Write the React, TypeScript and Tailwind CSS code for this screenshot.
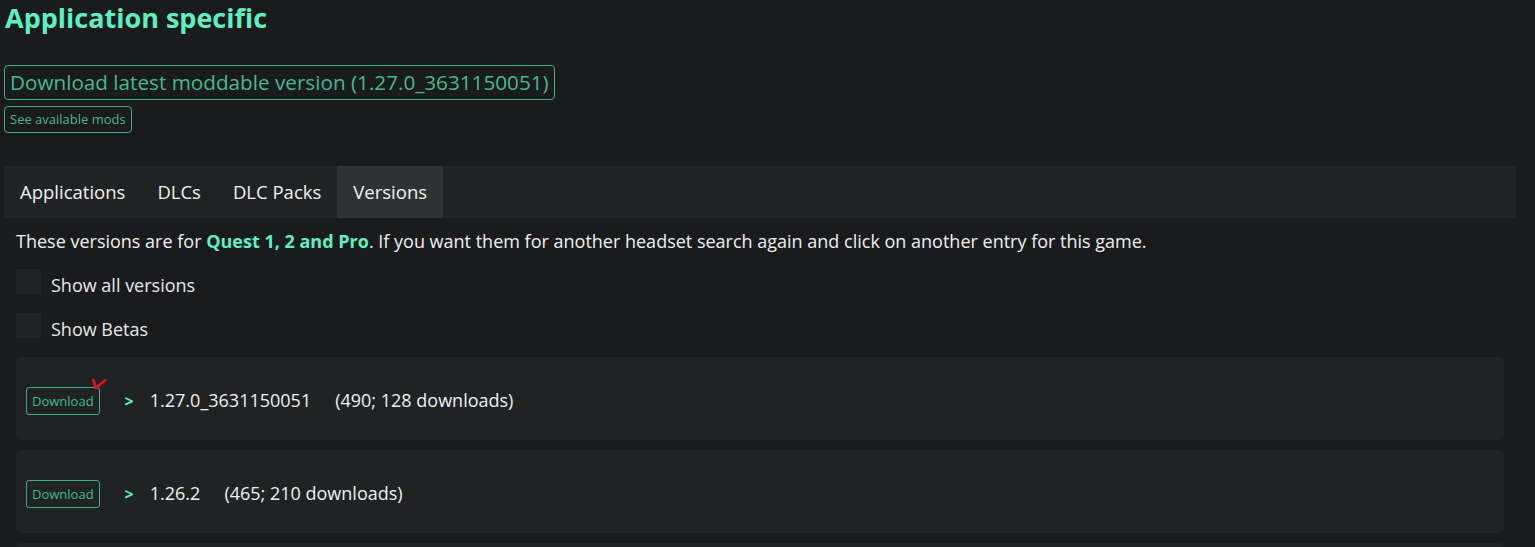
import React from "react";

const versions = [
  { v: "1.27.0_3631150051", info: "(490; 128 downloads)", mark: true },
  { v: "1.26.2", info: "(465; 210 downloads)", mark: false },
];

export default function App() {
  return (
    <div
      className="h-[547px] w-full overflow-hidden bg-[#1a1b1d] text-[#e8e8e8]"
      style={{ fontFamily: '"Open Sans", "Noto Sans", sans-serif' }}
    >
      <div className="pl-[4px] pr-[19px]">
        <h1 className="pl-[1px] text-[27px] font-bold leading-[36px] text-[#5ef0c0]">
          Application specific
        </h1>
        <div className="mt-[29px] flex flex-col items-start gap-[6px]">
          <button className="rounded-[4px] border border-[#3fae86] px-[5px] text-[20.7px] leading-[33px] text-[#45b98c]">
            Download latest moddable version (1.27.0_3631150051)
          </button>
          <button className="rounded-[4px] border border-[#3fae86] px-[5px] text-[13px] leading-[25px] text-[#45b98c]">
            See available mods
          </button>
        </div>

        <div className="mt-[33px] flex h-[52px] items-stretch bg-[#202324] text-[18.5px] text-[#f0f0f0]">
          <div className="flex items-center px-[16px]">Applications</div>
          <div className="flex items-center px-[16px]">DLCs</div>
          <div className="flex items-center px-[16px]">DLC Packs</div>
          <div className="flex items-center bg-[#2f3234] px-[16px]">Versions</div>
        </div>

        <div className="px-[12px]">
          <p className="mt-[10px] text-[18px] leading-[26px] text-[#f0f0f0]">
            These versions are for{" "}
            <span className="font-bold text-[#5ef0c0]">Quest 1, 2 and Pro</span>. If you
            want them for another headset search again and click on another entry for this
            game.
          </p>
          <div className="mt-[15px] flex flex-col gap-[19px]">
            <label className="flex h-[25px] items-center gap-[10px] text-[18px] leading-[25px]">
              <span className="h-[25px] w-[25px] bg-[#202324]" />
              <span className="translate-y-[4px]">Show all versions</span>
            </label>
            <label className="flex h-[25px] items-center gap-[10px] text-[18px] leading-[25px]">
              <span className="h-[25px] w-[25px] bg-[#202324]" />
              <span className="translate-y-[4px]">Show Betas</span>
            </label>
          </div>

          <div className="mt-[19px] flex flex-col gap-[10px]">
            {versions.map((r) => (
              <div
                key={r.v}
                className="flex h-[83px] shrink-0 items-center rounded-[5px] bg-[#202324] pl-[10px] pt-[4px]"
              >
                <div className="relative">
                  <button className="rounded-[3px] border border-[#3fae86] px-[5px] text-[13px] leading-[26px] text-[#45b98c]">
                    Download
                  </button>
                  {r.mark && (
                    <svg
                      className="absolute -right-[8px] -top-[11px]"
                      width="18"
                      height="16"
                      viewBox="0 0 18 16"
                    >
                      <path
                        d="M3.5 4 L5.5 12 L15 4.5"
                        fill="none"
                        stroke="#e0141e"
                        strokeWidth="2.8"
                        strokeLinecap="round"
                        strokeLinejoin="round"
                      />
                    </svg>
                  )}
                </div>
                <span className="ml-[25px] text-[16px] font-bold text-[#5ef0c0]">&gt;</span>
                <span className="ml-[16px] text-[18px] text-[#f0f0f0]">{r.v}</span>
                <span className="ml-[24px] text-[18px] text-[#f0f0f0]">{r.info}</span>
              </div>
            ))}
            <div className="h-[83px] shrink-0 rounded-[5px] bg-[#202324]" />
          </div>
        </div>
      </div>
    </div>
  );
}
